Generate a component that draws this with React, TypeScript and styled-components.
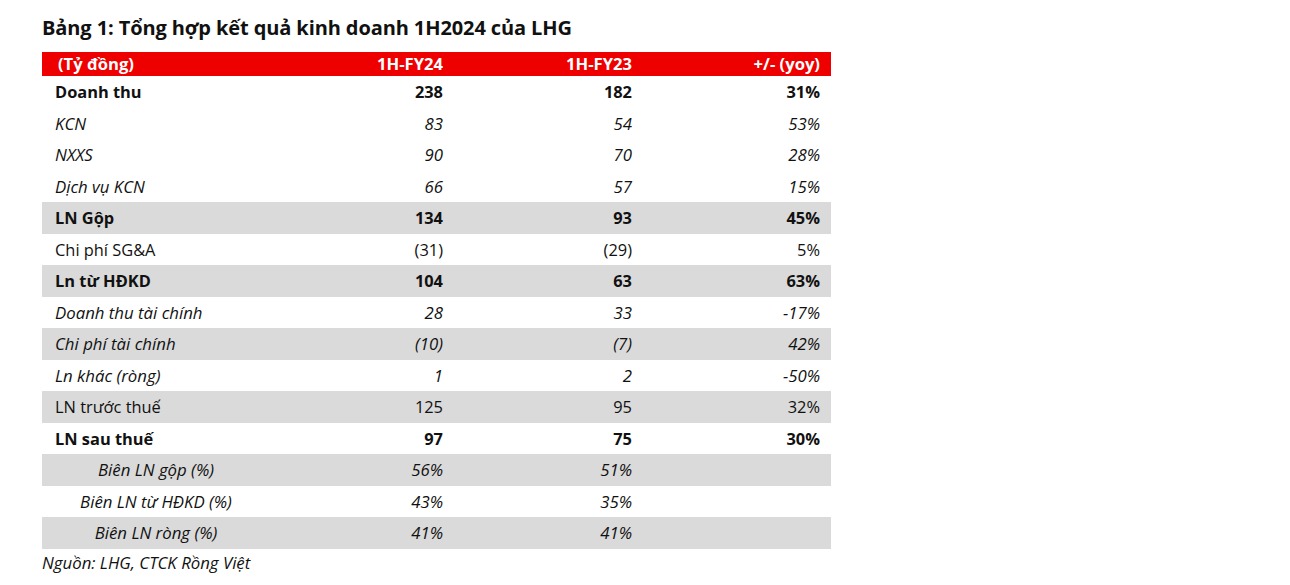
import React from "react";
import styled, { createGlobalStyle } from "styled-components";

const Global = createGlobalStyle`
  html, body { margin: 0; padding: 0; background: #ffffff; }
  body { font-family: "Open Sans", "Noto Sans", "Liberation Sans", sans-serif; color: #111111; }
`;

const Page = styled.div`
  width: 1290px;
  height: 585px;
  box-sizing: border-box;
  padding: 16px 0 0 42px;
  display: flex;
  flex-direction: column;
`;

const Title = styled.h1`
  margin: 0 0 12px 0;
  font-size: 20px;
  line-height: 24px;
  font-weight: 700;
  letter-spacing: -0.1px;
  color: #111111;
`;

const Table = styled.div`
  width: 789px;
  display: grid;
  grid-template-columns: 228px 184px 189px 188px;
`;

type RowProps = { $shade?: boolean };

const HeaderRow = styled.div`
  display: contents;
`;

const HeadCell = styled.div<{ $left?: boolean }>`
  background: #ee0000;
  color: #ffffff;
  font-weight: 700;
  font-size: 16.6px;
  height: 24px;
  line-height: 24px;
  text-align: ${(p) => (p.$left ? "left" : "right")};
  padding: ${(p) => (p.$left ? "0 0 0 16px" : "0 11px 0 0")};
`;

const Cell = styled.div<RowProps & { $label?: boolean; $bold?: boolean; $italic?: boolean; $center?: boolean }>`
  background: ${(p) => (p.$shade ? "#dadada" : "transparent")};
  height: 31.5px;
  line-height: 31.5px;
  font-size: ${(p) => (p.$italic ? "16.8px" : "16.4px")};
  font-weight: ${(p) => (p.$bold ? 700 : 400)};
  font-style: ${(p) => (p.$italic ? "italic" : "normal")};
  text-align: ${(p) => (p.$center ? "center" : p.$label ? "left" : "right")};
  padding: ${(p) => (p.$center ? "0" : p.$label ? "0 0 0 13px" : "0 11px 0 0")};
  white-space: nowrap;
  color: #111111;
`;

const Source = styled.div`
  margin-top: 2px;
  font-size: 16.8px;
  font-style: italic;
  line-height: 24px;
  color: #111111;
`;

type Row = {
  label: string;
  v: [string, string, string];
  bold?: boolean;
  italic?: boolean;
  shade?: boolean;
  margin?: boolean;
};

const rows: Row[] = [
  { label: "Doanh thu", v: ["238", "182", "31%"], bold: true },
  { label: "KCN", v: ["83", "54", "53%"], italic: true },
  { label: "NXXS", v: ["90", "70", "28%"], italic: true },
  { label: "Dịch vụ KCN", v: ["66", "57", "15%"], italic: true },
  { label: "LN Gộp", v: ["134", "93", "45%"], bold: true, shade: true },
  { label: "Chi phí SG&A", v: ["(31)", "(29)", "5%"] },
  { label: "Ln từ HĐKD", v: ["104", "63", "63%"], bold: true, shade: true },
  { label: "Doanh thu tài chính", v: ["28", "33", "-17%"], italic: true },
  { label: "Chi phí tài chính", v: ["(10)", "(7)", "42%"], italic: true, shade: true },
  { label: "Ln khác (ròng)", v: ["1", "2", "-50%"], italic: true },
  { label: "LN trước thuế", v: ["125", "95", "32%"], shade: true },
  { label: "LN sau thuế", v: ["97", "75", "30%"], bold: true },
  { label: "Biên LN gộp (%)", v: ["56%", "51%", ""], italic: true, shade: true, margin: true },
  { label: "Biên LN từ HĐKD (%)", v: ["43%", "35%", ""], italic: true, margin: true },
  { label: "Biên LN ròng (%)", v: ["41%", "41%", ""], italic: true, shade: true, margin: true },
];

export default function App() {
  return (
    <>
      <Global />
      <Page>
        <Title>Bảng 1: Tổng hợp kết quả kinh doanh 1H2024 của LHG</Title>
        <Table>
          <HeaderRow>
            <HeadCell $left>(Tỷ đồng)</HeadCell>
            <HeadCell>1H-FY24</HeadCell>
            <HeadCell>1H-FY23</HeadCell>
            <HeadCell>+/- (yoy)</HeadCell>
          </HeaderRow>
          {rows.map((r) => (
            <React.Fragment key={r.label}>
              <Cell $label $center={r.margin} $bold={r.bold} $italic={r.italic} $shade={r.shade}>
                {r.label}
              </Cell>
              {r.v.map((x, i) => (
                <Cell key={i} $bold={r.bold} $italic={r.italic} $shade={r.shade}>
                  {x}
                </Cell>
              ))}
            </React.Fragment>
          ))}
        </Table>
        <Source>Nguồn: LHG, CTCK Rồng Việt</Source>
      </Page>
    </>
  );
}
